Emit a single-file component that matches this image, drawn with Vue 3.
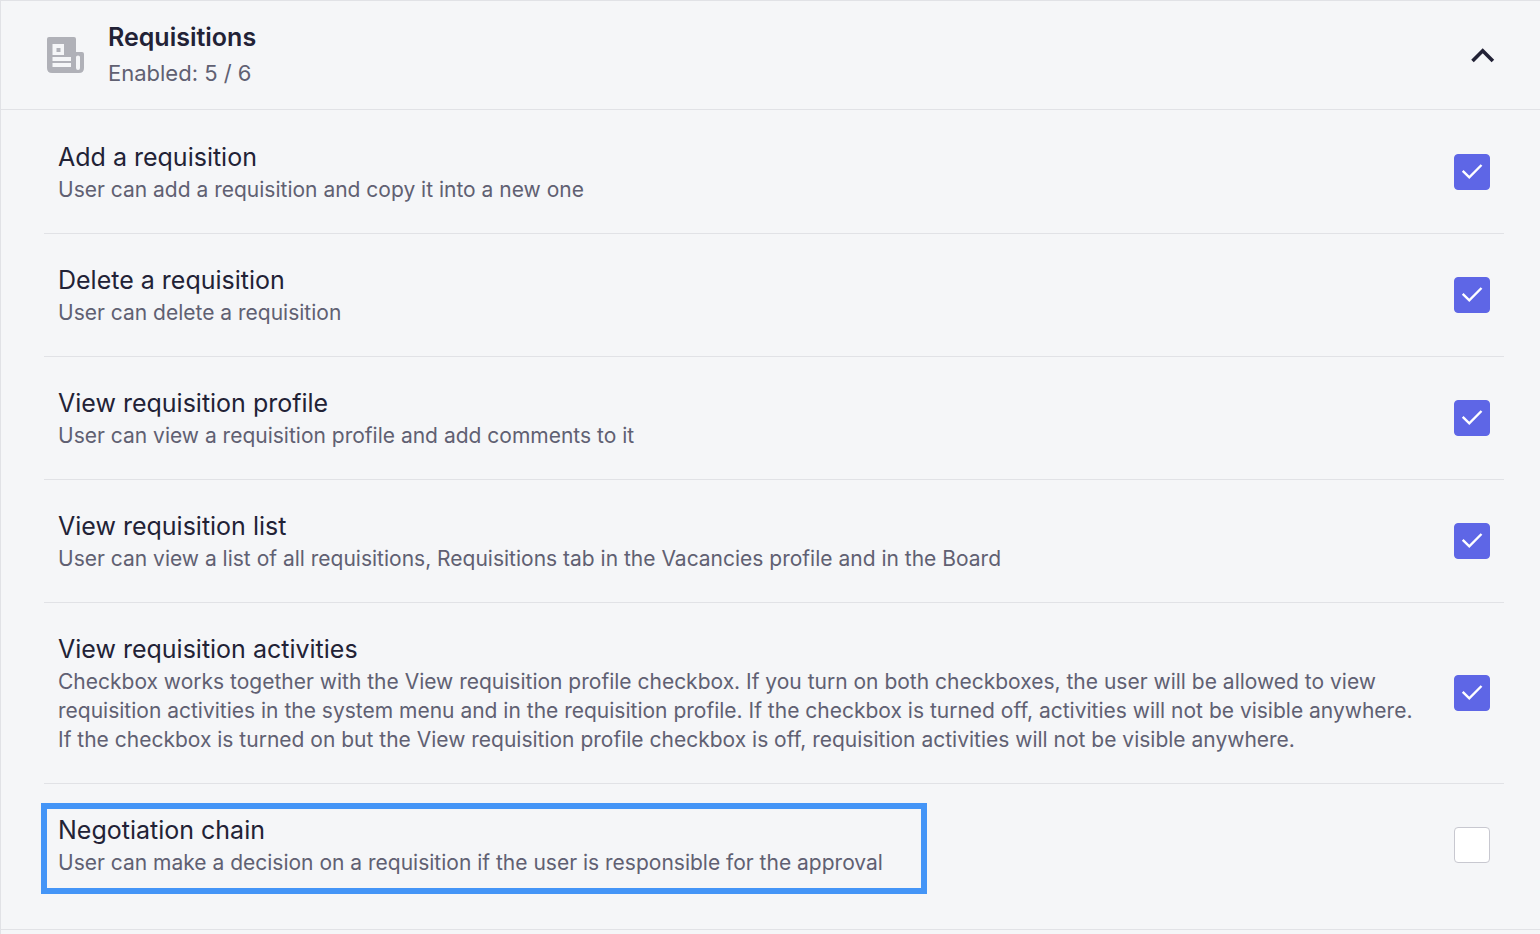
<template>
  <section class="permission-group">
    <header class="group-header">
      <svg class="group-icon" viewBox="0 0 37 37" fill="currentColor">
        <path
          fill-rule="evenodd"
          d="M2 0H27Q29 0 29 2V15H35Q37 15 37 17V31Q37 36 32 36H5Q0 36 0 31V2Q0 0 2 0ZM5.5 7V18H17V7ZM9.5 11H13.5V15H9.5ZM5.5 20V24H24V20ZM5.5 26V30H24V26ZM29 20V31Q29 33 31 33Q33 33 33 31V20Q33 18.5 31 18.5Q29 18.5 29 20Z"
        />
      </svg>
      <div class="group-info">
        <h2>Requisitions</h2>
        <p>Enabled: {{ enabledCount }} / {{ permissions.length }}</p>
      </div>
      <button
        class="btn-toggle"
        type="button"
        aria-label="Toggle requisitions"
        :aria-expanded="expanded"
        @click="expanded = !expanded"
      >
        <svg :class="{ collapsed: !expanded }" viewBox="0 0 26 16" fill="none" stroke="currentColor" stroke-width="3.6">
          <path d="M2.5 14 12.7 3.8 22.9 14" />
        </svg>
      </button>
    </header>

    <ul class="permission-list" v-show="expanded">
      <li v-for="item in permissions" :key="item.id" class="permission-row">
        <label :for="item.id" class="permission-text" :class="{ highlighted: item.highlighted }">
          <span class="permission-title">{{ item.title }}</span>
          <span class="permission-description">{{ item.description }}</span>
        </label>
        <span class="checkbox">
          <input :id="item.id" v-model="item.enabled" type="checkbox" />
          <svg v-if="item.enabled" viewBox="0 0 36 36" fill="none" stroke="#fff" stroke-width="2.4">
            <path d="M8.7 16.9 15.3 23.4 27.5 11" />
          </svg>
        </span>
      </li>
    </ul>
  </section>
</template>

<script setup>
import { computed, ref } from 'vue'

const expanded = ref(true)

const permissions = ref([
  {
    id: 'requisition-add',
    title: 'Add a requisition',
    description: 'User can add a requisition and copy it into a new one',
    enabled: true
  },
  {
    id: 'requisition-delete',
    title: 'Delete a requisition',
    description: 'User can delete a requisition',
    enabled: true
  },
  {
    id: 'requisition-profile',
    title: 'View requisition profile',
    description: 'User can view a requisition profile and add comments to it',
    enabled: true
  },
  {
    id: 'requisition-list',
    title: 'View requisition list',
    description: 'User can view a list of all requisitions, Requisitions tab in the Vacancies profile and in the Board',
    enabled: true
  },
  {
    id: 'requisition-activities',
    title: 'View requisition activities',
    description: 'Checkbox works together with the View requisition profile checkbox. If you turn on both checkboxes, the user will be allowed to view requisition activities in the system menu and in the requisition profile. If the checkbox is turned off, activities will not be visible anywhere. If the checkbox is turned on but the View requisition profile checkbox is off, requisition activities will not be visible anywhere.',
    enabled: true
  },
  {
    id: 'requisition-negotiation',
    title: 'Negotiation chain',
    description: 'User can make a decision on a requisition if the user is responsible for the approval',
    enabled: false,
    highlighted: true
  }
])

const enabledCount = computed(() => permissions.value.filter((item) => item.enabled).length)
</script>

<style>
body {
  background: #f5f6f8;
}
</style>

<style scoped>
.permission-group {
  box-sizing: border-box;
  min-height: 100vh;
  border-top: 1px solid #e1e2e6;
  border-left: 1px solid #e1e2e6;
  color: #222236;
  font-family: Inter, "Liberation Sans", sans-serif;
}

.group-header {
  display: flex;
  align-items: center;
  padding: 18px 44px 18px 46px;
  border-bottom: 1px solid #e1e2e6;
}

.group-icon {
  width: 37px;
  height: 37px;
  margin-right: 24px;
  color: #b0b1b8;
}

.group-info {
  flex: 1;
}

.group-info h2 {
  margin: 0;
  font-size: 25px;
  font-weight: 600;
  line-height: 36px;
}

.group-info p {
  margin: 0;
  color: #606072;
  font-size: 22px;
  line-height: 36px;
}

.btn-toggle {
  display: flex;
  padding: 0;
  border: 0;
  background: none;
  color: inherit;
  cursor: pointer;
}

.btn-toggle svg {
  width: 26px;
  height: 16px;
}

.btn-toggle svg.collapsed {
  transform: rotate(180deg);
}

.permission-list {
  margin: 0;
  padding: 1px 36px 23px 43px;
  border-bottom: 1px solid #e1e2e6;
  list-style: none;
}

.permission-row {
  display: flex;
  align-items: center;
  justify-content: space-between;
  gap: 24px;
  padding: 29px 14px;
}

.permission-row:not(:last-child) {
  border-bottom: 1px solid #e1e2e6;
}

.permission-text {
  position: relative;
  cursor: pointer;
}

.permission-text.highlighted::after {
  content: "";
  position: absolute;
  inset: -10px -44px -17px -17px;
  border: 6px solid #4495f7;
  pointer-events: none;
}

.permission-title {
  display: block;
  font-size: 25px;
  line-height: 35px;
}

.permission-description {
  display: block;
  color: #606072;
  font-size: 21px;
  line-height: 29px;
}

.checkbox {
  position: relative;
  flex-shrink: 0;
  width: 36px;
  height: 36px;
}

.checkbox input {
  display: block;
  box-sizing: border-box;
  width: 36px;
  height: 36px;
  margin: 0;
  border: 1px solid #c8c8d0;
  border-radius: 4px;
  background: #fff;
  appearance: none;
  cursor: pointer;
}

.checkbox input:checked {
  border-color: #5e66e6;
  background: #5e66e6;
}

.checkbox svg {
  position: absolute;
  inset: 0;
  pointer-events: none;
}
</style>
